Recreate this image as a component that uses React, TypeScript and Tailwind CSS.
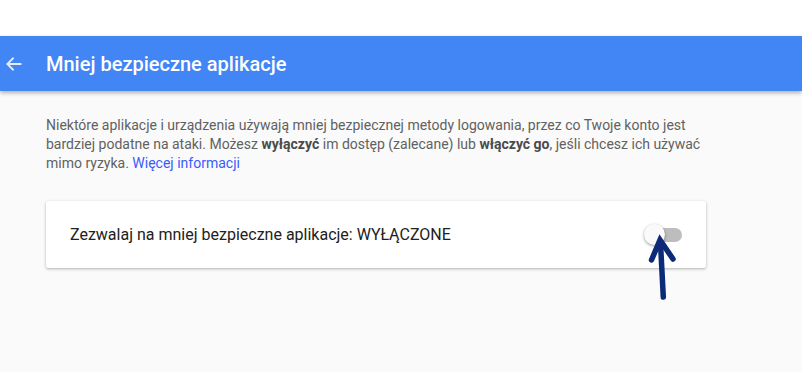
export default function App() {
    return (
        <div className="flex h-[372px] w-[802px] flex-col overflow-hidden bg-[#fafafa] font-['Roboto',sans-serif]">
            <div className="h-9 bg-white"></div>
            <header className="relative z-10 flex h-[55px] items-center bg-[#4285f4] shadow-[0_2px_4px_rgba(0,0,0,0.3)]">
                <svg className="ml-[4px] h-[20px] w-[20px]" viewBox="0 0 24 24" fill="none">
                    <path d="M21 12H4M11.5 4.5L4 12l7.5 7.5" stroke="#e3ecfd" strokeWidth="2.2" />
                </svg>
                <h1 className="ml-[22px] text-[20px] font-medium text-white">Mniej bezpieczne aplikacje</h1>
            </header>
            <main className="relative px-[46px] pt-[25px]">
                <p className="w-[660px] text-[14px] leading-[19px] text-[#616161]">
                    Niektóre aplikacje i urządzenia używają mniej bezpiecznej metody logowania, przez co Twoje konto jest bardziej podatne na ataki. Możesz <b className="font-bold text-[#4a4a4a]">wyłączyć</b> im dostęp (zalecane) lub <b className="font-bold text-[#4a4a4a]">włączyć go</b>, jeśli chcesz ich używać mimo ryzyka. <a className="text-[#3b5bff]">Więcej informacji</a>
                </p>
                <div className="mt-[28px] flex h-[67px] w-[660px] items-center justify-between rounded-[2px] bg-white pl-6 pr-6 shadow-[0_1px_3px_rgba(0,0,0,0.3)]">
                    <span className="text-[16px] text-[#212121]">Zezwalaj na mniej bezpieczne aplikacje: WYŁĄCZONE</span>
                    <div className="relative h-[14px] w-[37px] rounded-full bg-[#bdbdbd]">
                        <div className="absolute -left-[1px] -top-[4px] h-[21px] w-[21px] rounded-full bg-[#fafafa] shadow-[0_1px_3px_rgba(0,0,0,0.4)]"></div>
                    </div>
                </div>
                <svg className="absolute left-[640px] top-[142px]" width="40" height="70" viewBox="640 236 40 70">
                    <path d="M660.7 250L663.3 300" stroke="#0d2a78" strokeWidth="5.5" strokeLinecap="round" />
                    <path d="M651.5 263L660 243L673 262" stroke="#0d2a78" strokeWidth="5.5" strokeLinecap="round" strokeLinejoin="miter" fill="none" />
                </svg>
            </main>
        </div>
    )
}
